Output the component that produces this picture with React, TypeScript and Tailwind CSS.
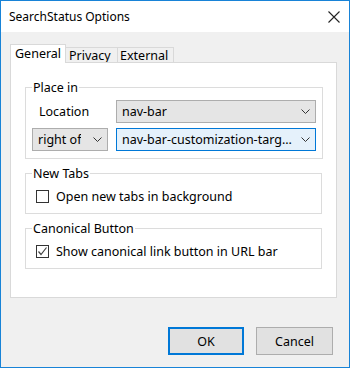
import React from 'react'

const Chevron = () => (
  <svg width="9" height="5" viewBox="0 0 9 5" className="shrink-0">
    <polyline points="0.5,0.5 4.5,4.5 8.5,0.5" fill="none" stroke="#333" strokeWidth="1" />
  </svg>
)

const Select: React.FC<{ value: string; focused?: boolean; className?: string }> = ({ value, focused, className }) => (
  <div
    className={
      'flex items-center justify-between h-[23px] pl-[5px] pr-[5px] border ' +
      (focused ? 'bg-[#e5f1fb] border-[#0078d7] ' : 'bg-[#e5e5e5] border-[#adadad] ') +
      (className ?? '')
    }
  >
    <span className="whitespace-nowrap overflow-hidden">{value}</span>
    <Chevron />
  </div>
)

const Checkbox: React.FC<{ checked?: boolean; label: string }> = ({ checked, label }) => (
  <div className="flex items-center h-[15px] pl-[4px]">
    <div className="w-[13px] h-[13px] border border-[#333] bg-white flex items-center justify-center">
      {checked && (
        <svg width="11" height="11" viewBox="0 0 11 11">
          <polyline points="1.5,5.5 4,8.5 9.5,1.5" fill="none" stroke="#444" strokeWidth="1.2" />
        </svg>
      )}
    </div>
    <span className="ml-[7px]">{label}</span>
  </div>
)

const Group: React.FC<{ title: string; className?: string; children: React.ReactNode }> = ({ title, className, children }) => (
  <fieldset className={'mx-[14px] border border-[#dcdcdc] px-[6px] ' + (className ?? '')}>
    <legend className="px-[1px] leading-[15px]">{title}</legend>
    {children}
  </fieldset>
)

export default function App() {
  return (
    <div
      className="w-[350px] h-[368px] border border-[#1883d7] bg-[#f0f0f0] flex flex-col text-[12.5px] leading-[15px] text-black"
      style={{ fontFamily: '"Noto Sans", "Liberation Sans", Arial, sans-serif' }}
    >
      {/* title bar */}
      <div className="h-[31px] bg-white flex items-center justify-between pl-[8px] pr-[9px]">
        <span className="text-[12px]">SearchStatus Options</span>
        <svg width="12" height="12" viewBox="0 0 12 12">
          <path d="M0.5 0.5 L11.5 11.5 M11.5 0.5 L0.5 11.5" stroke="#222" strokeWidth="1.1" />
        </svg>
      </div>

      <div className="flex flex-col pl-[9px] pr-[12px] pt-[11px]">
        {/* tabs */}
        <div className="flex items-end h-[19px]">
          <div className="relative z-10 h-[19px] -mb-px bg-white border border-b-0 border-[#d9d9d9] w-[56px] pl-[4px] pt-[1px] leading-[15px]">
            General
          </div>
          <div className="h-[15px] border border-b-0 border-l-0 border-[#d9d9d9] w-[52px] pl-[3px] leading-[15px]">
            Privacy
          </div>
          <div className="h-[15px] border border-b-0 border-l-0 border-[#d9d9d9] w-[56px] pl-[2px] leading-[15px]">
            External
          </div>
        </div>

        {/* panel */}
        <div className="h-[236px] bg-white border border-[#d9d9d9] flex flex-col">
          <Group title="Place in" className="mt-[17px] pt-[5px] pb-[7px]">
            <div className="flex items-center h-[23px]">
              <span className="w-[84px] pl-[7px]">Location</span>
              <Select value="nav-bar" className="w-[200px]" />
            </div>
            <div className="flex items-center gap-[8px] mt-[5px]">
              <Select value="right of" className="w-[76px]" />
              <Select value="nav-bar-customization-targ..." focused className="w-[200px]" />
            </div>
          </Group>

          <Group title="New Tabs" className="mt-[7px] pt-[8px] pb-[9px]">
            <Checkbox label="Open new tabs in background" />
          </Group>

          <Group title="Canonical Button" className="mt-[7px] pt-[8px] pb-[9px]">
            <Checkbox checked label="Show canonical link button in URL bar" />
          </Group>
        </div>
      </div>

      {/* buttons */}
      <div className="flex justify-end gap-[12px] pr-[16px] mt-[29px]">
        <button className="w-[76px] h-[28px] bg-[#e1e1e1] border-2 border-[#0078d7]">OK</button>
        <button className="w-[77px] h-[28px] bg-[#e1e1e1] border border-[#adadad]">Cancel</button>
      </div>
    </div>
  )
}
